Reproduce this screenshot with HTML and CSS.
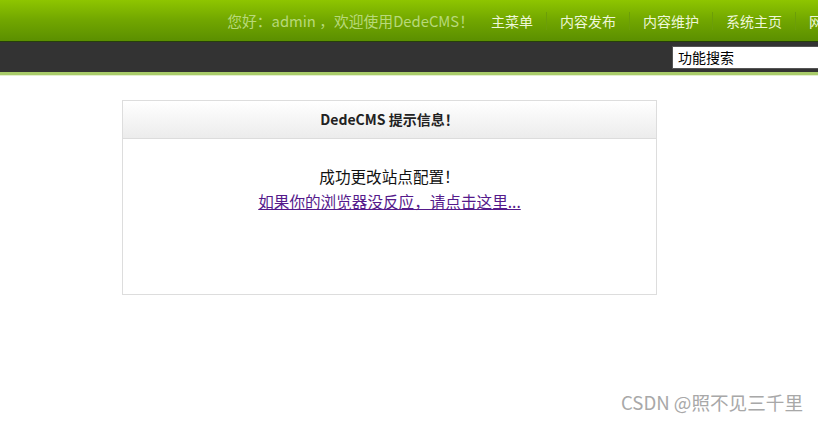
FILE: index.html
```html
<!DOCTYPE html>
<html lang="zh-CN">
  <head>
    <meta charset="UTF-8" />
    <title>DedeCMS 提示信息</title>
    <link rel="stylesheet" href="styles.css">
  </head>
  <body>
    <div class="top-bar">
      <div class="welcome">您好：admin ，欢迎使用DedeCMS！</div>
      <ul class="menu">
        <li>主菜单</li>
        <li>内容发布</li>
        <li>内容维护</li>
        <li>系统主页</li>
        <li>网站主页</li>
      </ul>
    </div>
    <div class="sub-bar">
      <input class="search" type="text" value="功能搜索" title="功能搜索" />
    </div>

    <div class="msg-box">
      <div class="msg-title">DedeCMS 提示信息！</div>
      <div class="msg-body">
        <div>成功更改站点配置！</div>
        <a href="#">如果你的浏览器没反应，请点击这里...</a>
      </div>
    </div>

    <div class="watermark">CSDN @照不见三千里</div>
  </body>
</html>
```

FILE: styles.css
```css
body {
  margin: 0;
  padding: 0;
  font-family: "Noto Sans CJK SC", "Microsoft YaHei", sans-serif;
  font-size: 14px;
  background-color: #fff;
  overflow: hidden;
  height: 422px;
  position: relative;
}

.top-bar {
  height: 41px;
  background: linear-gradient(to bottom, #8ec500 0%, #71a600 50%, #5b8f00 100%);
  display: flex;
  align-items: center;
  justify-content: flex-end;
  white-space: nowrap;
  overflow: hidden;
}

.welcome {
  color: #b8d97a;
  font-size: 14.8px;
  margin-right: 4px;
  flex-shrink: 0;
}

.menu {
  list-style: none;
  margin: 0 -60px 0 0;
  padding: 0;
  display: flex;
  flex-shrink: 0;
}

.menu li {
  color: #eef7d8;
  font-size: 14px;
  padding: 0 13px;
  border-left: 1px solid #6c9e08;
  line-height: 18px;
}

.menu li:first-child {
  border-left: none;
}

.sub-bar {
  height: 30px;
  background-color: #333;
  border-top: 1px solid #26400a;
  border-bottom: 3px solid #a9cc6a;
  display: flex;
  justify-content: flex-end;
  align-items: center;
  box-shadow: 0 1px 0 #e4efcf;
}

.search {
  width: 146px;
  height: 23px;
  box-sizing: border-box;
  margin: 0;
  padding: 0 5px;
  border: 1px solid #555;
  border-right: none;
  font-size: 14px;
  font-family: "Noto Sans CJK SC", sans-serif;
  color: #000;
  background-color: #fff;
}

.msg-box {
  width: 533px;
  margin: 25px 0 0 122px;
  border: 1px solid #ddd;
  height: 193px;
}

.msg-title {
  height: 37px;
  line-height: 37px;
  text-align: center;
  font-weight: bold;
  font-size: 14px;
  color: #222;
  background: linear-gradient(to bottom, #fff 0%, #ececec 100%);
  border-bottom: 1px solid #dcdcdc;
}

.msg-body {
  padding-top: 25px;
  text-align: center;
  font-size: 15.6px;
  line-height: 25px;
  color: #111;
}

.msg-body a {
  color: #551a8b;
  text-decoration: underline;
}

.watermark {
  position: absolute;
  right: 15px;
  bottom: 7px;
  font-size: 18.6px;
  color: #a8a8a8;
  font-family: "Noto Sans CJK SC", sans-serif;
}
```
